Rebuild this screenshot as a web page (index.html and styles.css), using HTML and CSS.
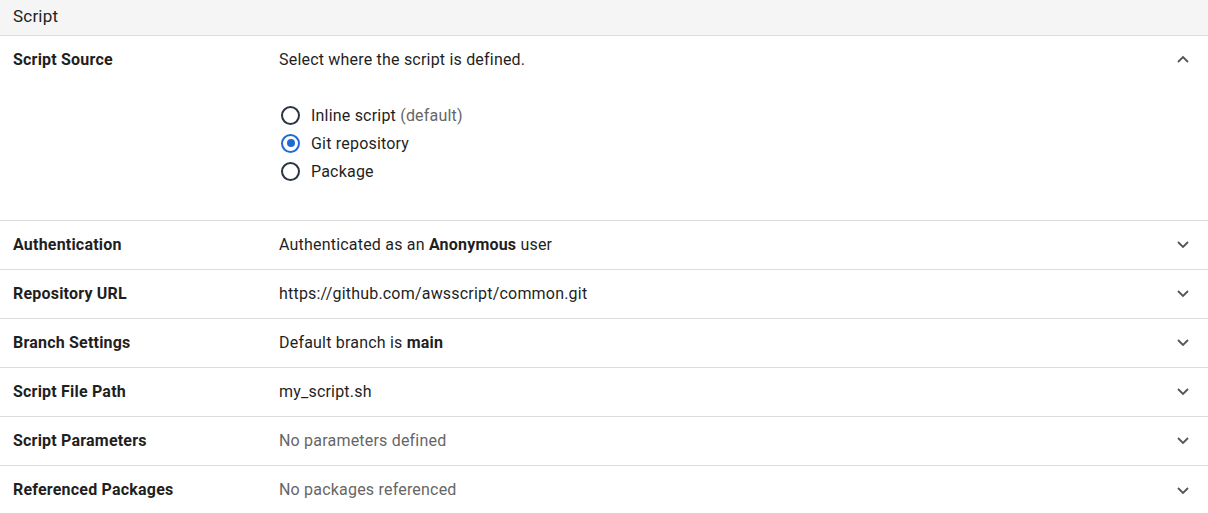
FILE: index.html
```html
<!DOCTYPE html>
<html>
<head>
<meta charset="utf-8">
<link rel="stylesheet" href="styles.css">
</head>
<body>
<div class="panel">
  <div class="panel-header">Script</div>
  <div class="row row-open">
    <div class="label">Script Source</div>
    <div class="value">
      <div class="desc">Select where the script is defined.</div>
      <div class="radios">
        <div class="radio"><span class="circle"></span><span>Inline script <span class="muted">(default)</span></span></div>
        <div class="radio"><span class="circle checked"></span><span>Git repository</span></div>
        <div class="radio"><span class="circle"></span><span>Package</span></div>
      </div>
    </div>
    <div class="chev"><svg width="12" height="8" viewBox="0 0 12 8"><path d="M1 7 L6 2 L11 7" fill="none" stroke="#555" stroke-width="1.8"/></svg></div>
  </div>
  <div class="row">
    <div class="label">Authentication</div>
    <div class="value">Authenticated as an <b>Anonymous</b> user</div>
    <div class="chev"><svg width="12" height="8" viewBox="0 0 12 8"><path d="M1 1 L6 6 L11 1" fill="none" stroke="#555" stroke-width="1.8"/></svg></div>
  </div>
  <div class="row">
    <div class="label">Repository URL</div>
    <div class="value">https://github.com/awsscript/common.git</div>
    <div class="chev"><svg width="12" height="8" viewBox="0 0 12 8"><path d="M1 1 L6 6 L11 1" fill="none" stroke="#555" stroke-width="1.8"/></svg></div>
  </div>
  <div class="row">
    <div class="label">Branch Settings</div>
    <div class="value">Default branch is <b>main</b></div>
    <div class="chev"><svg width="12" height="8" viewBox="0 0 12 8"><path d="M1 1 L6 6 L11 1" fill="none" stroke="#555" stroke-width="1.8"/></svg></div>
  </div>
  <div class="row">
    <div class="label">Script File Path</div>
    <div class="value">my_script.sh</div>
    <div class="chev"><svg width="12" height="8" viewBox="0 0 12 8"><path d="M1 1 L6 6 L11 1" fill="none" stroke="#555" stroke-width="1.8"/></svg></div>
  </div>
  <div class="row">
    <div class="label">Script Parameters</div>
    <div class="value muted">No parameters defined</div>
    <div class="chev"><svg width="12" height="8" viewBox="0 0 12 8"><path d="M1 1 L6 6 L11 1" fill="none" stroke="#555" stroke-width="1.8"/></svg></div>
  </div>
  <div class="row last">
    <div class="label">Referenced Packages</div>
    <div class="value muted">No packages referenced</div>
    <div class="chev"><svg width="12" height="8" viewBox="0 0 12 8"><path d="M1 1 L6 6 L11 1" fill="none" stroke="#555" stroke-width="1.8"/></svg></div>
  </div>
</div>
</body>
</html>
```
FILE: styles.css
```css
* { box-sizing: border-box; }
body {
  margin: 0;
  font-family: Roboto, "Liberation Sans", sans-serif;
  font-size: 16px;
  letter-spacing: 0.2px;
  color: #1f1f1f;
  background: #fff;
}
.panel { width: 1208px; }
.panel-header {
  height: 36px;
  background: #f5f5f5;
  border-bottom: 1px solid #dcdcdc;
  padding: 0 13px;
  font-size: 17px;
  line-height: 32px;
  color: #222;
}
.row {
  display: flex;
  align-items: center;
  min-height: 49px;
  border-bottom: 1px solid #dcdcdc;
  padding: 0 0 2px 13px;
}
.row.last { border-bottom: none; }
.row-open {
  align-items: flex-start;
  height: 185px;
  padding-bottom: 0;
}
.label {
  width: 266px;
  font-weight: 700;
  color: #1f1f1f;
}
.value { flex: 1; }
.value b { font-weight: 700; }
.muted { color: #666; }
.chev {
  width: 50px;
  display: flex;
  justify-content: center;
  padding-top: 2px;
}
.row-open .label { padding-top: 14px; }
.row-open .desc { padding-top: 14px; }
.row-open .chev { padding-top: 19px; }
.radios {
  display: flex;
  flex-direction: column;
  gap: 8px;
  margin-top: 36px;
}
.radio {
  display: flex;
  align-items: center;
  gap: 11px;
  height: 20px;
  padding-left: 2px;
}
.circle {
  width: 19px;
  height: 19px;
  border: 2px solid #2a3444;
  border-radius: 50%;
  display: inline-block;
  flex: none;
  position: relative;
}
.circle.checked {
  border-color: #1f6bd1;
}
.circle.checked::after {
  content: "";
  position: absolute;
  left: 3.5px;
  top: 3.5px;
  width: 8px;
  height: 8px;
  border-radius: 50%;
  background: #1f6bd1;
}
```
